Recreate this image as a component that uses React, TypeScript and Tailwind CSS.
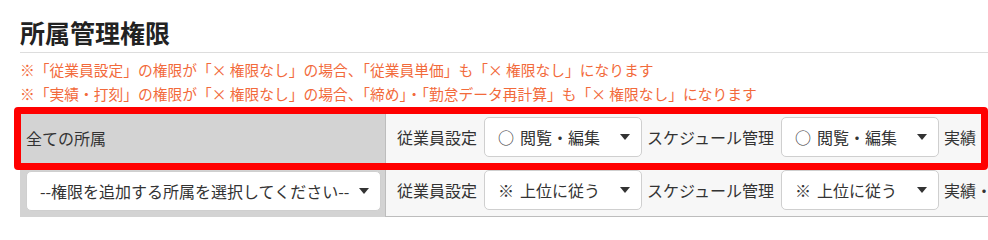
const FONT = "font-['Noto_Sans_CJK_JP','Noto_Sans',sans-serif]";

function Arrow() {
  return (
    <svg width="10" height="6" viewBox="0 0 10 6" className="shrink-0">
      <path d="M0 0H10L5 6Z" fill="#333" />
    </svg>
  );
}

function Select({
  mark,
  value,
  width = "w-[158px]",
}: {
  mark?: string;
  value: string;
  width?: string;
}) {
  return (
    <div
      className={`flex h-[40px] shrink-0 items-center justify-between rounded-[5px] border border-[#cfcfcf] bg-white pl-[13px] pr-[11px] text-[16px] text-[#333] ${width}`}
    >
      <span className="flex items-center gap-[6px] whitespace-nowrap">
        {mark && <span>{mark}</span>}
        <span>{value}</span>
      </span>
      <Arrow />
    </div>
  );
}

function PermGroup({ label, mark, value }: { label: string; mark: string; value: string }) {
  return (
    <div className="flex shrink-0 items-center gap-[7px]">
      <span className="whitespace-nowrap text-[16px] text-[#333]">{label}</span>
      <Select mark={mark} value={value} />
    </div>
  );
}

function Row({ first, mark, value }: { first: boolean; mark: string; value: string }) {
  return (
    <div className="flex h-[53px] w-max">
      <div className="flex w-[365px] shrink-0 items-center bg-[#d3d3d3] px-[6px]">
        {first ? (
          <span className="text-[16px] text-[#333]">全ての所属</span>
        ) : (
          <Select value="--権限を追加する所属を選択してください--" width="w-[355px]" />
        )}
      </div>
      <div className="flex shrink-0 items-center gap-[5px] border-b border-l border-[#bdbdbd] bg-[#f7f7f7] pl-[11px] pr-2">
        <PermGroup label="従業員設定" mark={mark} value={value} />
        <PermGroup label="スケジュール管理" mark={mark} value={value} />
        <PermGroup label="実績・打刻" mark={mark} value={value} />
        <PermGroup label="締め" mark={mark} value={value} />
      </div>
    </div>
  );
}

export default function App() {
  return (
    <div className={`relative h-[239px] w-[988px] overflow-hidden bg-white pl-5 ${FONT}`}>
      <h2 className="border-b border-[#dddddd] pb-[4px] pt-4 text-[25px] font-bold leading-[32px] text-[#222]">
        所属管理権限
      </h2>
      <div className="mt-[5px] text-[14.75px] leading-[24px] text-[#f26a3b]">
        <p className="whitespace-nowrap">※「従業員設定」の権限が「× 権限なし」の場合、「従業員単価」も「× 権限なし」になります</p>
        <p className="whitespace-nowrap">※「実績・打刻」の権限が「× 権限なし」の場合、「締め」・「勤怠データ再計算」も「× 権限なし」になります</p>
      </div>
      <div className="mt-[5px]">
        <Row first mark="○" value="閲覧・編集" />
        <Row first={false} mark="※" value="上位に従う" />
      </div>
      {/* highlight frame over the first row */}
      <div className="pointer-events-none absolute left-[14px] right-0 top-[107px] h-[63px] rounded-[4px] border-[7px] border-[#ff0000]" />
    </div>
  );
}
